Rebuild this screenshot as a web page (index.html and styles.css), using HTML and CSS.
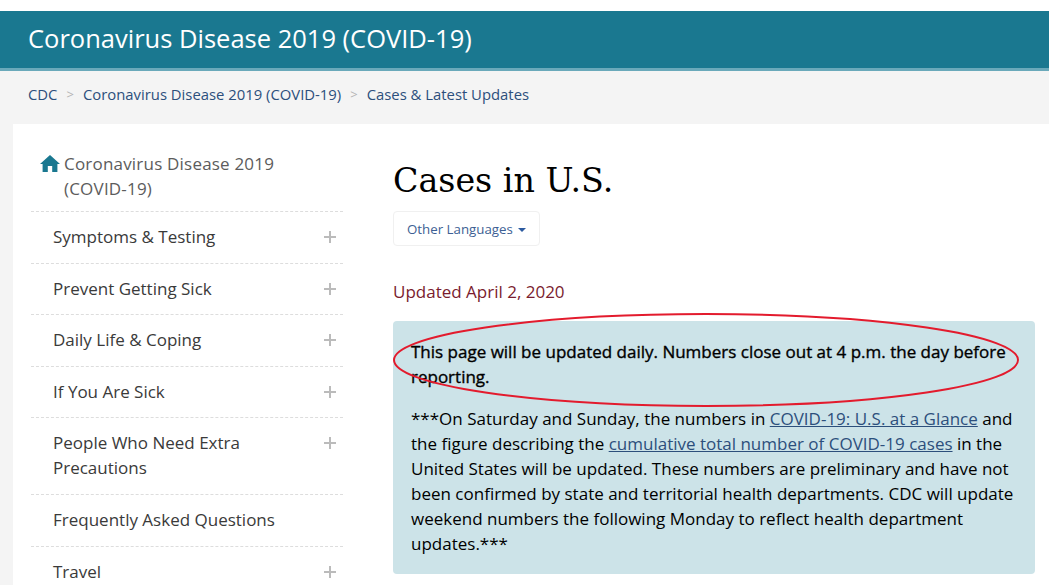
FILE: index.html
```html
<!DOCTYPE html>
<html lang="en">
<head>
  <meta charset="UTF-8">
  <title>Cases in U.S.</title>
  <link rel="stylesheet" href="styles.css">
</head>
<body>
  <!-- Site title bar -->
  <div class="site-title">Coronavirus Disease 2019 (COVID-19)</div>

  <!-- Breadcrumbs -->
  <div class="crumbs">
    <a href="#">CDC</a>
    <span class="sep">&gt;</span>
    <a href="#">Coronavirus Disease 2019 (COVID-19)</a>
    <span class="sep">&gt;</span>
    <a href="#">Cases &amp; Latest Updates</a>
  </div>

  <div class="sheet">
    <!-- Left nav -->
    <nav class="side">
      <a class="side-home" href="#">
        <svg class="home-icon" viewBox="0 0 20 17"><path d="M10 0 L20 9 L17.4 9 L17.4 17 L12.2 17 L12.2 11 L7.8 11 L7.8 17 L2.6 17 L2.6 9 L0 9 Z"/></svg>
        <span>Coronavirus Disease 2019 (COVID-19)</span>
      </a>
      <div class="side-item"><span>Symptoms &amp; Testing</span><i class="plus"></i></div>
      <div class="side-item"><span>Prevent Getting Sick</span><i class="plus"></i></div>
      <div class="side-item"><span>Daily Life &amp; Coping</span><i class="plus"></i></div>
      <div class="side-item"><span>If You Are Sick</span><i class="plus"></i></div>
      <div class="side-item"><span>People Who Need Extra Precautions</span><i class="plus"></i></div>
      <div class="side-item"><span>Frequently Asked Questions</span></div>
      <div class="side-item"><span>Travel</span><i class="plus"></i></div>
    </nav>

    <!-- Main content -->
    <main class="content">
      <h1>Cases in U.S.</h1>
      <button class="lang-btn">Other Languages<i class="caret"></i></button>
      <p class="updated">Updated April 2, 2020</p>
      <div class="notice">
        <svg class="circle" viewBox="0 0 630 96"><ellipse cx="314" cy="48" rx="312" ry="46"/></svg>
        <p class="strong-line">This page will be updated daily. Numbers close out at 4 p.m. the day before reporting.</p>
        <p>***On Saturday and Sunday, the numbers in <a href="#">COVID-19: U.S. at a Glance</a> and the figure describing the <a href="#">cumulative total number of COVID-19 cases</a> in the United States will be updated. These numbers are preliminary and have not been confirmed by state and territorial health departments. CDC will update weekend numbers the following Monday to reflect health department updates.***</p>
      </div>
    </main>
  </div>
</body>
</html>
```

FILE: styles.css
```css
html, body {
  height: 585px;
  overflow: hidden;
}

body {
  margin: 0;
  padding-top: 11px;
  box-sizing: border-box;
  background: #f4f4f4;
  font-family: 'Open Sans', sans-serif;
  font-size: 17px;
  color: #000;
  background-image: linear-gradient(#fff 11px, transparent 11px);
}

/* Title bar */
.site-title {
  height: 57px;
  padding-left: 28px;
  background: #1a7890;
  border-bottom: 3px solid #6aa9ba;
  color: #fff;
  font-size: 25.5px;
  line-height: 55px;
}

/* Breadcrumbs */
.crumbs {
  display: flex;
  align-items: center;
  height: 45px;
  padding-bottom: 8px;
  padding-left: 28px;
  font-size: 14.85px;
}

.crumbs a {
  color: #2c4f7c;
  text-decoration: none;
}

.crumbs .sep {
  margin: 0 9px;
  color: #b5b5b5;
  font-size: 13px;
}

.sheet {
  display: flex;
  margin-left: 13px;
  background: #fff;
  height: 461px;
}

/* Left nav */
.side {
  width: 312px;
  margin-left: 18px;
  padding-top: 27px;
  flex-shrink: 0;
}

.side-home {
  display: flex;
  padding: 0 50px 10px 9px;
  border-bottom: 1px dashed #ddd;
  color: #5c5c5c;
  text-decoration: none;
  line-height: 25px;
  letter-spacing: 0.2px;
}

.home-icon {
  width: 20px;
  height: 17px;
  margin: 4px 4px 0 0;
  flex-shrink: 0;
  fill: #1a7890;
}

.side-item {
  display: flex;
  justify-content: space-between;
  padding: 12px 0 13.6px 22px;
  border-bottom: 1px dashed #ddd;
  color: #3a3a3a;
  line-height: 25px;
}

.side-item span {
  max-width: 240px;
}

.plus {
  width: 12px;
  height: 12px;
  margin: 7px 7px 0 0;
  flex-shrink: 0;
  background: linear-gradient(#bbb, #bbb) center / 12px 2px no-repeat,
              linear-gradient(#bbb, #bbb) center / 2px 12px no-repeat;
}

/* Main content */
.content {
  flex: 1;
  margin-left: 50px;
  margin-right: 14px;
  padding-top: 32px;
}

h1 {
  margin: 0 0 5px;
  font-family: 'DejaVu Serif', serif;
  font-size: 33.3px;
  font-weight: 400;
  line-height: 50px;
}

.lang-btn {
  display: block;
  width: 147px;
  height: 35px;
  padding: 0 13px;
  background: #fff;
  border: 1px solid #f0f0f0;
  border-radius: 4px;
  font-family: 'Open Sans', sans-serif;
  font-size: 13.3px;
  color: #3d5f94;
  text-align: left;
  white-space: nowrap;
}

.caret {
  display: inline-block;
  margin-left: 5px;
  vertical-align: 2px;
  border-top: 4px solid #2c5aa0;
  border-left: 4px solid transparent;
  border-right: 4px solid transparent;
}

.updated {
  margin: 33px 0 17px;
  line-height: 25px;
  color: #7a1c2e;
}

.notice {
  position: relative;
  padding: 18px 18px 18px;
  background: #cce3e8;
  border-radius: 4px;
  line-height: 25px;
}

.notice p {
  margin: 0;
}

.notice .strong-line {
  margin-bottom: 17px;
  -webkit-text-stroke: 0.35px #000;
}

.notice a {
  color: #2c4f7c;
}

/* Red hand-drawn ring sits on top of the box */
.circle {
  position: absolute;
  top: -9px;
  left: -1px;
  width: 630px;
  height: 96px;
  overflow: visible;
  fill: none;
  stroke: #e31b2d;
  stroke-width: 2;
}
```
